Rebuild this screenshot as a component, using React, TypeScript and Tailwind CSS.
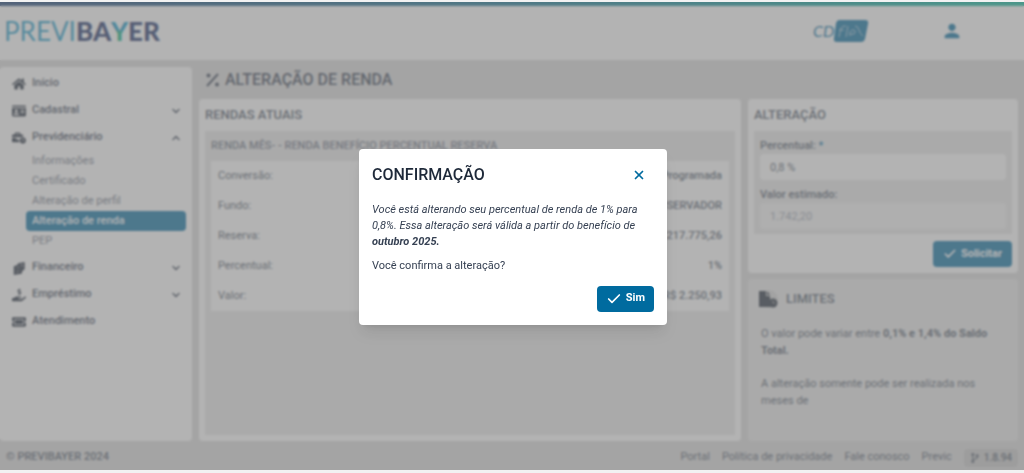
import React from 'react';
import clsx from 'clsx';
import type { IconType } from 'react-icons';
import {
  FaBusinessTime,
  FaCodeBranch,
  FaHandHoldingUsd,
  FaHome,
  FaIdCard,
  FaTicketAlt,
} from 'react-icons/fa';
import { MdPerson } from 'react-icons/md';
import { Check, ChevronDown, ChevronUp, X } from 'lucide-react';

interface MenuEntry {
  label: string;
  icon: IconType;
  children?: string[];
  expandable?: boolean;
}

const CoinsIcon: IconType = ({ className }) => (
  <svg viewBox="0 0 16 16" fill="currentColor" className={className}>
    <path d="M7 2.5 14.5 1v8.5L12 11l-1 3.5L2 16V6l4-1.5z" />
    <path d="M5 8.5c1-1.5 3.5-2 4-.5M4.5 12c1.5 1 3.5 0 4-1.5" stroke="#8b8d93" strokeWidth="1" fill="none" />
    <path d="M9 4.5 12 4v3" stroke="#8b8d93" strokeWidth="1" fill="none" />
  </svg>
);

const FileClockIcon = () => (
  <svg viewBox="0 0 20 20" className="w-5 h-5" aria-hidden="true">
    <circle cx="11" cy="10" r="9" fill="#d6d6d6" />
    <path d="M1 2h7v5h4v5a5 5 0 0 0 1 6H1z" fill="#1f2937" />
    <path d="M9 2l3 4H9z" fill="#1f2937" />
    <circle cx="15" cy="14" r="4.5" fill="#1f2937" />
    <path d="M15 11.5V14h2" stroke="#999" fill="none" />
  </svg>
);

const MENU: MenuEntry[] = [
  { label: 'Início', icon: FaHome },
  { label: 'Cadastral', icon: FaIdCard, expandable: true },
  {
    label: 'Previdenciário',
    icon: FaBusinessTime,
    expandable: true,
    children: ['Informações', 'Certificado', 'Alteração de perfil', 'Alteração de renda', 'PEP'],
  },
  { label: 'Financeiro', icon: CoinsIcon, expandable: true },
  { label: 'Empréstimo', icon: FaHandHoldingUsd, expandable: true },
  { label: 'Atendimento', icon: FaTicketAlt },
];

const ACTIVE_ITEM = 'Alteração de renda';

const INCOME_ROWS = [
  { label: 'Conversão:', value: 'Renda Programada' },
  { label: 'Fundo:', value: 'CONSERVADOR' },
  { label: 'Reserva:', value: 'R$ 217.775,26' },
  { label: 'Percentual:', value: '1%' },
  { label: 'Valor:', value: 'R$ 2.250,93' },
];

const Header: React.FC = () => (
  <header className="bg-white">
    <div className="h-1 bg-gradient-to-r from-[#10386f] via-[#0a6f8f] to-[#00b898]" />
    <div className="flex items-center h-[54px] pb-1 pl-1 pr-[61px]">
      <svg width="164" height="40" viewBox="0 0 164 40" role="img" aria-label="PREVIBAYER">
        <defs>
          <linearGradient id="logoY" x1="0" y1="0" x2="0" y2="1">
            <stop offset="0.45" stopColor="#0a93c4" />
            <stop offset="0.55" stopColor="#10b080" />
          </linearGradient>
        </defs>
        <g fontFamily="Lato, sans-serif" fontSize="26">
          <text x="0" y="30" fill="#1b9ac8">PREVI</text>
          <g fontWeight="900" fill="#1a2f66">
            <text x="72" y="30">BA</text>
            <text x="107" y="30" fill="url(#logoY)">Y</text>
            <text x="124" y="30">ER</text>
          </g>
        </g>
      </svg>
      <div className="flex items-center gap-[70px] ml-auto">
        <svg width="60" height="26" viewBox="0 0 60 26" role="img" aria-label="CD Flex">
          <text x="2" y="19" fontFamily="Lato, sans-serif" fontStyle="italic" fontSize="16" fill="#006b9f">
            CD
          </text>
          <path d="M28 2h26q4 0 3 4l-3 15q-1 3-4 3H26q-4 0-3-4l2-15q1-3 3-3z" fill="#006b9f" />
          <path
            d="M28 19l2-9q1-2 5-2M28 12h5M35 19l2-11M39 18q-1-6 3-6t1 4h-4M44 8q3 0 4 4t4 6"
            stroke="#9fc4d8"
            strokeWidth="1"
            fill="none"
          />
        </svg>
        <button aria-label="Minha conta" className="text-[#006b9f]">
          <MdPerson className="w-[22px] h-[22px]" />
        </button>
      </div>
    </div>
  </header>
);

const Sidebar: React.FC = () => (
  <nav className="w-48 shrink-0 bg-white rounded pt-[3px] px-1.5">
    <ul>
      {MENU.map(({ label, icon: Icon, children, expandable }) => (
        <li key={label}>
          <button className="flex items-center w-full h-[27px] pl-1.5 pr-1 text-[11px] font-medium text-gray-700">
            <Icon className="w-3.5 h-3.5 mr-1.5 text-gray-800" />
            {label}
            {expandable &&
              (children ? (
                <ChevronUp className="w-3 h-3 ml-auto" strokeWidth={3} />
              ) : (
                <ChevronDown className="w-3 h-3 ml-auto" strokeWidth={3} />
              ))}
          </button>
          {children && (
            <ul className="pl-5 pb-[3px]">
              {children.map((child) => (
                <li key={child}>
                  <a
                    href="#"
                    className={clsx(
                      'block h-5 leading-5 pl-1.5 text-[11px] rounded',
                      child === ACTIVE_ITEM ? 'bg-[#006b9f] text-white font-medium' : 'text-gray-500'
                    )}
                  >
                    {child}
                  </a>
                </li>
              ))}
            </ul>
          )}
        </li>
      ))}
    </ul>
  </nav>
);

const CurrentIncome: React.FC = () => (
  <section className="flex-1 flex flex-col bg-white rounded p-1.5">
    <h2 className="h-[26px] leading-5 text-[13px] font-medium text-gray-600">RENDAS ATUAIS</h2>
    <div className="flex-1 bg-[#e9e9e9] p-1.5">
      <h3 className="h-6 leading-[18px] text-[11px] font-medium text-gray-500">
        RENDA MÊS- - RENDA BENEFÍCIO PERCENTUAL RESERVA
      </h3>
      <table className="w-full bg-white text-[11px] text-gray-600">
        <tbody>
          {INCOME_ROWS.map((row) => (
            <tr key={row.label} className="h-[30px]">
              <th scope="row" className="px-[7px] text-left font-normal">{row.label}</th>
              <td className="px-[7px] text-right font-medium">{row.value}</td>
            </tr>
          ))}
        </tbody>
      </table>
    </div>
  </section>
);

const ChangeForm: React.FC = () => (
  <form className="bg-white rounded p-1.5" onSubmit={(e) => e.preventDefault()}>
    <h2 className="h-[26px] leading-5 text-[13px] font-medium text-gray-600">ALTERAÇÃO</h2>
    <div className="bg-[#e9e9e9] p-1.5 pb-[5px] text-[11px] text-gray-600">
      <label htmlFor="percentual" className="block h-[17px] leading-[18px] font-medium">
        Percentual: <span className="text-[#006b9f]">*</span>
      </label>
      <input
        id="percentual"
        defaultValue="0,8 %"
        className="block w-full h-[26px] px-2.5 rounded bg-white"
      />
      <label htmlFor="valor" className="block h-[23px] pt-[7px] leading-4 font-medium">
        Valor estimado:
      </label>
      <input
        id="valor"
        defaultValue="1.742,20"
        disabled
        className="block w-full h-[26px] px-2.5 rounded bg-[#f4f4f4] text-gray-400"
      />
    </div>
    <div className="flex justify-end pt-[7px]">
      <button className="flex items-center gap-1 h-[26px] px-2.5 rounded bg-[#006b9f] text-white text-[11px] font-bold">
        <Check className="w-3.5 h-3.5" strokeWidth={3} />
        Solicitar
      </button>
    </div>
  </form>
);

const Limits: React.FC = () => (
  <section className="flex-1 bg-[#e9e9e9] rounded px-2.5 pt-2">
    <h2 className="flex items-center gap-2 h-6 text-[13px] font-medium text-gray-600">
      <FileClockIcon />
      LIMITES
    </h2>
    <div className="pl-[3px] pr-4 pt-3.5 text-[11px] leading-[17px] text-gray-600">
      <p>
        O valor pode variar entre <strong>0,1% e 1,4% do Saldo Total.</strong>
      </p>
      <p className="pt-4">A alteração somente pode ser realizada nos meses de</p>
    </div>
  </section>
);

const Footer: React.FC = () => (
  <footer className="flex items-center h-[29px] pt-1 px-1.5 text-[11px] text-gray-600">
    <span className="font-medium">© PREVIBAYER 2024</span>
    <div className="flex items-center gap-3 ml-auto">
      <a href="#">Portal</a>
      <a href="#">Política de privacidade</a>
      <a href="#">Fale conosco</a>
      <a href="#">Previc</a>
      <span className="flex items-center gap-1 h-[18px] px-1.5 rounded bg-[#c8c8c8] text-[10px] font-medium">
        <FaCodeBranch className="w-2.5 h-2.5" />
        1.8.94
      </span>
    </div>
  </footer>
);

const ConfirmDialog: React.FC = () => (
  <div className="fixed inset-x-0 top-0.5 bottom-[3px] flex items-center justify-center pl-0.5 pt-px bg-[#808080]/60 backdrop-blur-[1px]">
    <div
      role="dialog"
      aria-modal="true"
      aria-labelledby="confirm-title"
      className="w-[308px] px-[13px] pt-3 pb-[13px] bg-white rounded shadow-lg text-gray-700"
    >
      <div className="flex items-center justify-between h-7 pr-2">
        <h2 id="confirm-title" className="text-base font-medium text-gray-800">CONFIRMAÇÃO</h2>
        <button aria-label="Fechar" className="text-[#006b9f]">
          <X className="w-3.5 h-3.5" strokeWidth={3} />
        </button>
      </div>
      <div className="pt-[13px] text-[11px] leading-4">
        <p className="italic">
          Você está alterando seu percentual de renda de 1% para 0,8%. Essa alteração será válida a partir
          do benefício de <strong>outubro 2025.</strong>
        </p>
        <p className="pt-2">Você confirma a alteração?</p>
      </div>
      <div className="flex justify-end pt-3">
        <button className="flex items-center gap-1 h-[26px] px-[9px] rounded bg-[#006b9f] text-white text-[11px] font-bold">
          <Check className="w-4 h-4" strokeWidth={2.5} />
          Sim
        </button>
      </div>
    </div>
  </div>
);

export default function App() {
  return (
    <div className="min-h-screen flex flex-col pt-0.5 pb-[3px] bg-[#f2f2f2] font-[Roboto,sans-serif]">
      <Header />
      <div className="flex-1 flex flex-col bg-[#dadada] pt-[7px]">
        <div className="flex-1 flex gap-[7px] pr-1.5">
          <Sidebar />
          <main className="flex-1 flex flex-col">
            <h1 className="flex items-center gap-1 h-8 pb-1.5 pl-1.5 text-base font-medium text-gray-700">
              <svg viewBox="0 0 16 16" className="w-4 h-4" fill="currentColor" aria-hidden="true">
                <path d="M2 14 13 2" stroke="currentColor" strokeWidth="2" />
                <circle cx="3.5" cy="3.5" r="2" />
                <circle cx="12" cy="12.5" r="2" />
              </svg>
              ALTERAÇÃO DE RENDA
            </h1>
            <div className="flex-1 flex gap-[7px]">
              <CurrentIncome />
              <div className="w-[270px] flex flex-col gap-1.5">
                <ChangeForm />
                <Limits />
              </div>
            </div>
          </main>
        </div>
        <Footer />
      </div>
      <ConfirmDialog />
    </div>
  );
}
